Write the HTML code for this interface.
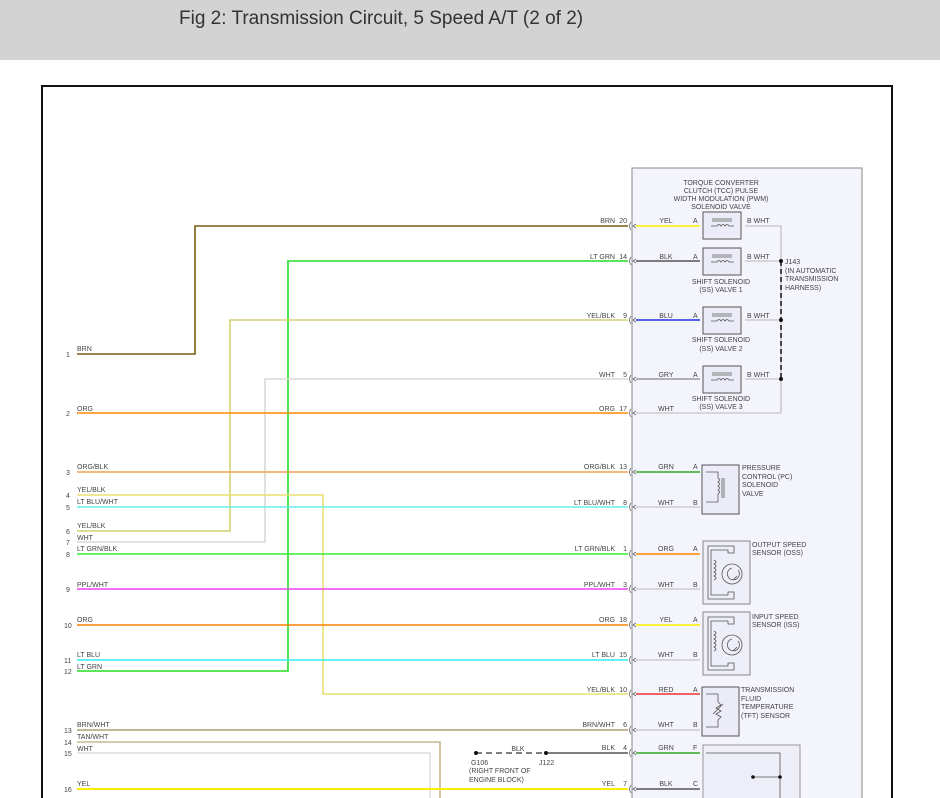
<!DOCTYPE html>
<html><head><meta charset="utf-8">
<style>
html,body{margin:0;padding:0;background:#fff;width:940px;height:798px;overflow:hidden}
.hdr{position:absolute;left:0;top:0;width:940px;height:60px;background:#d3d3d3}
.hdr span{position:absolute;left:179px;top:8px;font:19px "Liberation Sans",sans-serif;color:#333}
svg{position:absolute;left:0;top:0}
text{font-family:"Liberation Sans",sans-serif;font-size:7px;fill:#444}
</style></head><body>
<div class="hdr"><span>Fig 2: Transmission Circuit, 5 Speed A/T (2 of 2)</span></div>
<svg width="940" height="798" viewBox="0 0 940 798">
<rect x="42" y="86" width="850" height="720" fill="#fff" stroke="#111" stroke-width="2"/>
<rect x="632" y="168" width="230" height="640" fill="#f4f4fc" stroke="#888" stroke-width="1"/>
<g fill="none" stroke-width="1.6">
<!-- left wires -->
<polyline points="77,354 195,354 195,226 628,226" stroke="#7a5a10"/>
<polyline points="77,671 288,671 288,261 628,261" stroke="#22dd22"/>
<polyline points="77,531 230,531 230,320 628,320" stroke="#d4d070"/>
<polyline points="77,542 265,542 265,379 628,379" stroke="#d8d8d8"/>
<line x1="77" y1="413" x2="628" y2="413" stroke="#ff8800"/>
<line x1="77" y1="472" x2="628" y2="472" stroke="#f5a050"/>
<polyline points="77,495 323,495 323,694 628,694" stroke="#e8e070"/>
<line x1="77" y1="507" x2="628" y2="507" stroke="#66eeee"/>
<line x1="77" y1="554" x2="628" y2="554" stroke="#33ee33"/>
<line x1="77" y1="589" x2="628" y2="589" stroke="#ee44ee"/>
<line x1="77" y1="625" x2="628" y2="625" stroke="#ff8000"/>
<line x1="77" y1="660" x2="628" y2="660" stroke="#33eeee"/>
<line x1="77" y1="730" x2="628" y2="730" stroke="#b0a070"/>
<polyline points="77,742 440,742 440,800" stroke="#c8b890"/>
<polyline points="77,753 430,753 430,800" stroke="#dddddd"/>
<line x1="77" y1="789" x2="628" y2="789" stroke="#ffee00" stroke-width="2"/>
<line x1="548" y1="753" x2="628" y2="753" stroke="#555"/>
<line x1="476" y1="753" x2="548" y2="753" stroke="#555" stroke-dasharray="6,4"/>
<!-- inside panel wires -->
<line x1="636" y1="226" x2="700" y2="226" stroke="#ffee00"/>
<line x1="636" y1="261" x2="700" y2="261" stroke="#555"/>
<line x1="636" y1="320" x2="700" y2="320" stroke="#2233dd"/>
<line x1="636" y1="379" x2="700" y2="379" stroke="#999"/>
<line x1="636" y1="413" x2="781" y2="413" stroke="#ccc"/>
<line x1="636" y1="472" x2="700" y2="472" stroke="#33aa22"/>
<line x1="636" y1="507" x2="700" y2="507" stroke="#ccc"/>
<line x1="636" y1="554" x2="700" y2="554" stroke="#ff8800"/>
<line x1="636" y1="589" x2="700" y2="589" stroke="#ccc"/>
<line x1="636" y1="625" x2="700" y2="625" stroke="#ffee00"/>
<line x1="636" y1="660" x2="700" y2="660" stroke="#ccc"/>
<line x1="636" y1="694" x2="700" y2="694" stroke="#ee3333"/>
<line x1="636" y1="730" x2="700" y2="730" stroke="#ccc"/>
<line x1="636" y1="753" x2="700" y2="753" stroke="#33aa22"/>
<line x1="636" y1="789" x2="700" y2="789" stroke="#555"/>
<polyline points="745,226 781,226 781,413" stroke="#ccc"/>
<line x1="745" y1="261" x2="781" y2="261" stroke="#ccc"/>
<line x1="745" y1="320" x2="781" y2="320" stroke="#ccc"/>
<line x1="745" y1="379" x2="781" y2="379" stroke="#ccc"/>
<line x1="781" y1="261" x2="781" y2="379" stroke="#222" stroke-dasharray="5,3"/>
</g>
<g fill="#111"><circle cx="781" cy="261" r="2"/><circle cx="781" cy="320" r="2"/><circle cx="781" cy="379" r="2"/><circle cx="476" cy="753" r="2"/><circle cx="546" cy="753" r="2"/></g>
<!-- connector chevrons -->
<g fill="none" stroke="#666" stroke-width="0.8">
<path d="M631,222 q-3,4 0,8 M636,224 l-3,2 3,2"/><path d="M631,257 q-3,4 0,8 M636,259 l-3,2 3,2"/>
<path d="M631,316 q-3,4 0,8 M636,318 l-3,2 3,2"/><path d="M631,375 q-3,4 0,8 M636,377 l-3,2 3,2"/>
<path d="M631,409 q-3,4 0,8 M636,411 l-3,2 3,2"/><path d="M631,468 q-3,4 0,8 M636,470 l-3,2 3,2"/>
<path d="M631,503 q-3,4 0,8 M636,505 l-3,2 3,2"/><path d="M631,550 q-3,4 0,8 M636,552 l-3,2 3,2"/>
<path d="M631,585 q-3,4 0,8 M636,587 l-3,2 3,2"/><path d="M631,621 q-3,4 0,8 M636,623 l-3,2 3,2"/>
<path d="M631,656 q-3,4 0,8 M636,658 l-3,2 3,2"/><path d="M631,690 q-3,4 0,8 M636,692 l-3,2 3,2"/>
<path d="M631,726 q-3,4 0,8 M636,728 l-3,2 3,2"/><path d="M631,749 q-3,4 0,8 M636,751 l-3,2 3,2"/>
<path d="M631,785 q-3,4 0,8 M636,787 l-3,2 3,2"/>
</g>
<!-- solenoid boxes -->
<g fill="#ececf8" stroke="#555" stroke-width="1">
<rect x="703" y="212" width="38" height="27"/><rect x="703" y="248" width="38" height="27"/>
<rect x="703" y="307" width="38" height="27"/><rect x="703" y="366" width="38" height="27"/>
<rect x="702" y="465" width="37" height="49"/><rect x="703" y="541" width="47" height="63" fill="#eeeef8" stroke="#888"/>
<rect x="703" y="612" width="47" height="63" fill="#eeeef8" stroke="#888"/>
<rect x="702" y="687" width="37" height="49"/><rect x="703" y="745" width="97" height="60" fill="#eeeef8" stroke="#999"/>
</g>
<g fill="none" stroke="#555" stroke-width="0.8">
<path d="M711,226 h6 q2,-3 4,0 q2,-3 4,0 q2,-3 4,0 h5 M712,219 h20 M712,221 h20"/>
<path d="M711,262 h6 q2,-3 4,0 q2,-3 4,0 q2,-3 4,0 h5 M712,255 h20 M712,257 h20"/>
<path d="M711,321 h6 q2,-3 4,0 q2,-3 4,0 q2,-3 4,0 h5 M712,314 h20 M712,316 h20"/>
<path d="M711,380 h6 q2,-3 4,0 q2,-3 4,0 q2,-3 4,0 h5 M712,373 h20 M712,375 h20"/>
<path d="M706,472 h12 v6 q3,2 0,4 q3,2 0,4 q3,2 0,4 q3,2 0,4 v8 h-12 M722,478 v20 M724,478 v20"/>
<path d="M708,546 h26 v7 h-6 v-3 h-17 v45 h17 v-3 h6 v7 h-26 z M714,560 q4,2 0,4 q4,2 0,4 q4,2 0,4 q4,2 0,4 q4,2 0,4"/>
<circle cx="732" cy="574" r="10"/><path d="M738,570 a6,6 0 1 1 -6,-2 M733,580 l4,-4"/>
<path d="M708,617 h26 v7 h-6 v-3 h-17 v45 h17 v-3 h6 v7 h-26 z M714,631 q4,2 0,4 q4,2 0,4 q4,2 0,4 q4,2 0,4 q4,2 0,4"/>
<circle cx="732" cy="645" r="10"/><path d="M738,641 a6,6 0 1 1 -6,-2 M733,651 l4,-4"/>
<path d="M706,694 h12 v8 l3,3 -5,3 5,3 -5,3 5,3 -3,3 v7 h-12 M713,714 l10,-10"/>
<path d="M706,753 h74 v48 M752,777 h28"/>
</g>
<g fill="#111"><circle cx="753" cy="777" r="1.8"/><circle cx="780" cy="777" r="1.8"/></g>
<!-- left labels -->
<g>
<text x="77" y="351">BRN</text><text x="66" y="357">1</text>
<text x="77" y="411">ORG</text><text x="66" y="416">2</text>
<text x="77" y="469">ORG/BLK</text><text x="66" y="475">3</text>
<text x="77" y="492">YEL/BLK</text><text x="66" y="498">4</text>
<text x="77" y="504">LT BLU/WHT</text><text x="66" y="510">5</text>
<text x="77" y="528">YEL/BLK</text><text x="66" y="534">6</text>
<text x="77" y="540">WHT</text><text x="66" y="545">7</text>
<text x="77" y="551">LT GRN/BLK</text><text x="66" y="557">8</text>
<text x="77" y="587">PPL/WHT</text><text x="66" y="592">9</text>
<text x="77" y="622">ORG</text><text x="64" y="628">10</text>
<text x="77" y="657">LT BLU</text><text x="64" y="663">11</text>
<text x="77" y="669">LT GRN</text><text x="64" y="674">12</text>
<text x="77" y="727">BRN/WHT</text><text x="64" y="733">13</text>
<text x="77" y="739">TAN/WHT</text><text x="64" y="745">14</text>
<text x="77" y="751">WHT</text><text x="64" y="756">15</text>
<text x="77" y="786">YEL</text><text x="64" y="792">16</text>
</g>
<g text-anchor="end">
<text x="615" y="223">BRN</text><text x="627" y="223">20</text>
<text x="615" y="259">LT GRN</text><text x="627" y="259">14</text>
<text x="615" y="318">YEL/BLK</text><text x="627" y="318">9</text>
<text x="615" y="377">WHT</text><text x="627" y="377">5</text>
<text x="615" y="411">ORG</text><text x="627" y="411">17</text>
<text x="615" y="469">ORG/BLK</text><text x="627" y="469">13</text>
<text x="615" y="505">LT BLU/WHT</text><text x="627" y="505">8</text>
<text x="615" y="551">LT GRN/BLK</text><text x="627" y="551">1</text>
<text x="615" y="587">PPL/WHT</text><text x="627" y="587">3</text>
<text x="615" y="622">ORG</text><text x="627" y="622">18</text>
<text x="615" y="657">LT BLU</text><text x="627" y="657">15</text>
<text x="615" y="692">YEL/BLK</text><text x="627" y="692">10</text>
<text x="615" y="727">BRN/WHT</text><text x="627" y="727">6</text>
<text x="615" y="750">BLK</text><text x="627" y="750">4</text>
<text x="615" y="786">YEL</text><text x="627" y="786">7</text>
</g>
<g text-anchor="middle">
<text x="666" y="223">YEL</text><text x="666" y="259">BLK</text><text x="666" y="318">BLU</text><text x="666" y="377">GRY</text>
<text x="666" y="411">WHT</text><text x="666" y="469">GRN</text><text x="666" y="505">WHT</text><text x="666" y="551">ORG</text>
<text x="666" y="587">WHT</text><text x="666" y="622">YEL</text><text x="666" y="657">WHT</text><text x="666" y="692">RED</text>
<text x="666" y="727">WHT</text><text x="666" y="750">GRN</text><text x="666" y="786">BLK</text>
<text x="721" y="185">TORQUE CONVERTER</text><text x="721" y="193">CLUTCH (TCC) PULSE</text>
<text x="721" y="201">WIDTH MODULATION (PWM)</text><text x="721" y="209">SOLENOID VALVE</text>
<text x="721" y="284">SHIFT SOLENOID</text><text x="721" y="292">(SS) VALVE 1</text>
<text x="721" y="342">SHIFT SOLENOID</text><text x="721" y="351">(SS) VALVE 2</text>
<text x="721" y="401">SHIFT SOLENOID</text><text x="721" y="409">(SS) VALVE 3</text>
<text x="518" y="751">BLK</text>
</g>
<g>
<text x="693" y="223">A</text><text x="693" y="259">A</text><text x="693" y="318">A</text><text x="693" y="377">A</text>
<text x="693" y="469">A</text><text x="693" y="505">B</text><text x="693" y="551">A</text><text x="693" y="587">B</text>
<text x="693" y="622">A</text><text x="693" y="657">B</text><text x="693" y="692">A</text><text x="693" y="727">B</text>
<text x="693" y="750">F</text><text x="693" y="786">C</text>
<text x="747" y="223">B  WHT</text><text x="747" y="259">B  WHT</text><text x="747" y="318">B  WHT</text><text x="747" y="377">B  WHT</text>
<text x="785" y="264">J143</text><text x="785" y="273">(IN AUTOMATIC</text><text x="785" y="281">TRANSMISSION</text><text x="785" y="290">HARNESS)</text>
<text x="742" y="470">PRESSURE</text><text x="742" y="479">CONTROL (PC)</text><text x="742" y="487">SOLENOID</text><text x="742" y="496">VALVE</text>
<text x="752" y="547">OUTPUT SPEED</text><text x="752" y="555">SENSOR (OSS)</text>
<text x="752" y="619">INPUT SPEED</text><text x="752" y="627">SENSOR (ISS)</text>
<text x="741" y="692">TRANSMISSION</text><text x="741" y="701">FLUID</text><text x="741" y="709">TEMPERATURE</text><text x="741" y="718">(TFT) SENSOR</text>
<text x="471" y="765">G106</text><text x="469" y="773">(RIGHT FRONT OF</text><text x="469" y="782">ENGINE BLOCK)</text>
<text x="539" y="765">J122</text>
</g>
</svg>
</body></html>
